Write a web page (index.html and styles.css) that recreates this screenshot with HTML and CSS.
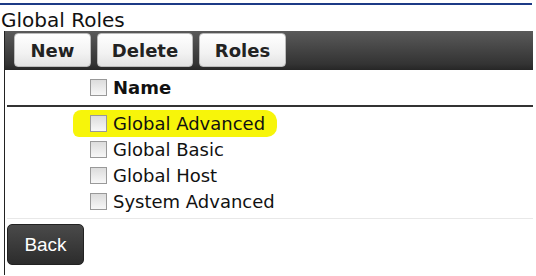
FILE: index.html
```html
<!DOCTYPE html>
<html lang="en">
<head>
<meta charset="UTF-8">
<title>Global Roles</title>
<link rel="stylesheet" href="styles.css">
</head>
<body>

<div class="top-rule"></div>
<div class="title">Global Roles</div>

<div class="panel">
  <div class="toolbar">
    <button class="tool-btn btn-new">New</button>
    <button class="tool-btn btn-delete">Delete</button>
    <button class="tool-btn btn-roles">Roles</button>
  </div>

  <div class="list-head">
    <span class="check"></span>
    <span class="head-label">Name</span>
  </div>

  <ul class="role-list">
    <li class="role-row">
      <span class="marker">
        <span class="check"></span>
        <span class="role-name">Global Advanced</span>
      </span>
    </li>
    <li class="role-row">
      <span class="check"></span>
      <span class="role-name">Global Basic</span>
    </li>
    <li class="role-row">
      <span class="check"></span>
      <span class="role-name">Global Host</span>
    </li>
    <li class="role-row">
      <span class="check"></span>
      <span class="role-name">System Advanced</span>
    </li>
  </ul>

  <div class="footer">
    <button class="back-btn">Back</button>
  </div>
</div>

</body>
</html>
```

FILE: styles.css
```css
body {
  margin: 0;
  padding-top: 3px;
  font-family: "DejaVu Sans", Verdana, sans-serif;
  background-color: #fff;
  color: #111;
}
.top-rule {
  width: 532px;
  height: 2px;
  background-color: #1c3a86;
}
.title {
  height: 26px;
  padding-left: 1px;
  font-size: 20px;
  line-height: 31px;
  overflow: hidden;
}
.panel {
  width: 528px;
  margin-left: 4px;
  border-left: 1px solid #222;
  padding-bottom: 10px;
}
.toolbar {
  display: flex;
  gap: 6px;
  height: 39px;
  padding: 2px 0 0 9px;
  box-sizing: border-box;
  background: linear-gradient(#5a5a5a, #333 85%, #262626);
}
.tool-btn {
  height: 34px;
  padding: 0;
  border: 1px solid #bbb;
  border-radius: 4px;
  background: linear-gradient(#fff, #f2f2f2 60%, #e2e2e2);
  font-family: "DejaVu Sans", Verdana, sans-serif;
  font-size: 18px;
  font-weight: bold;
  color: #222;
}
.btn-new { width: 77px; }
.btn-delete { width: 96px; }
.btn-roles { width: 87px; }
.check {
  display: inline-block;
  width: 15px;
  height: 15px;
  border: 1px solid #999;
  background: linear-gradient(#dcdcdc, #f7f7f7);
  box-sizing: content-box;
}
.list-head {
  display: flex;
  align-items: center;
  gap: 6px;
  height: 37px;
  padding-left: 83px;
  border-bottom: 2px solid #333;
  margin-left: 2px;
  box-sizing: border-box;
}
.head-label {
  font-size: 18px;
  font-weight: bold;
}
.role-list {
  list-style: none;
  margin: 0 0 0 2px;
  padding: 3px 0 4px;
  border-bottom: 1px solid #e8e8e8;
}
.role-row {
  display: flex;
  align-items: center;
  gap: 6px;
  height: 26px;
  padding-left: 83px;
}
.marker {
  display: flex;
  align-items: center;
  gap: 6px;
  margin-left: -17px;
  padding: 3px 12px 3px 17px;
  border-radius: 8px 12px 10px 6px;
  background-color: #f7f50a;
}
.role-name {
  font-size: 18px;
}
.footer {
  padding: 5px 0 0 2px;
}
.back-btn {
  width: 77px;
  height: 41px;
  border: 1px solid #222;
  border-radius: 5px;
  background: linear-gradient(#4a4a4a, #2c2c2c);
  font-family: "Liberation Sans", Arial, sans-serif;
  font-size: 19px;
  color: #fff;
}
```
